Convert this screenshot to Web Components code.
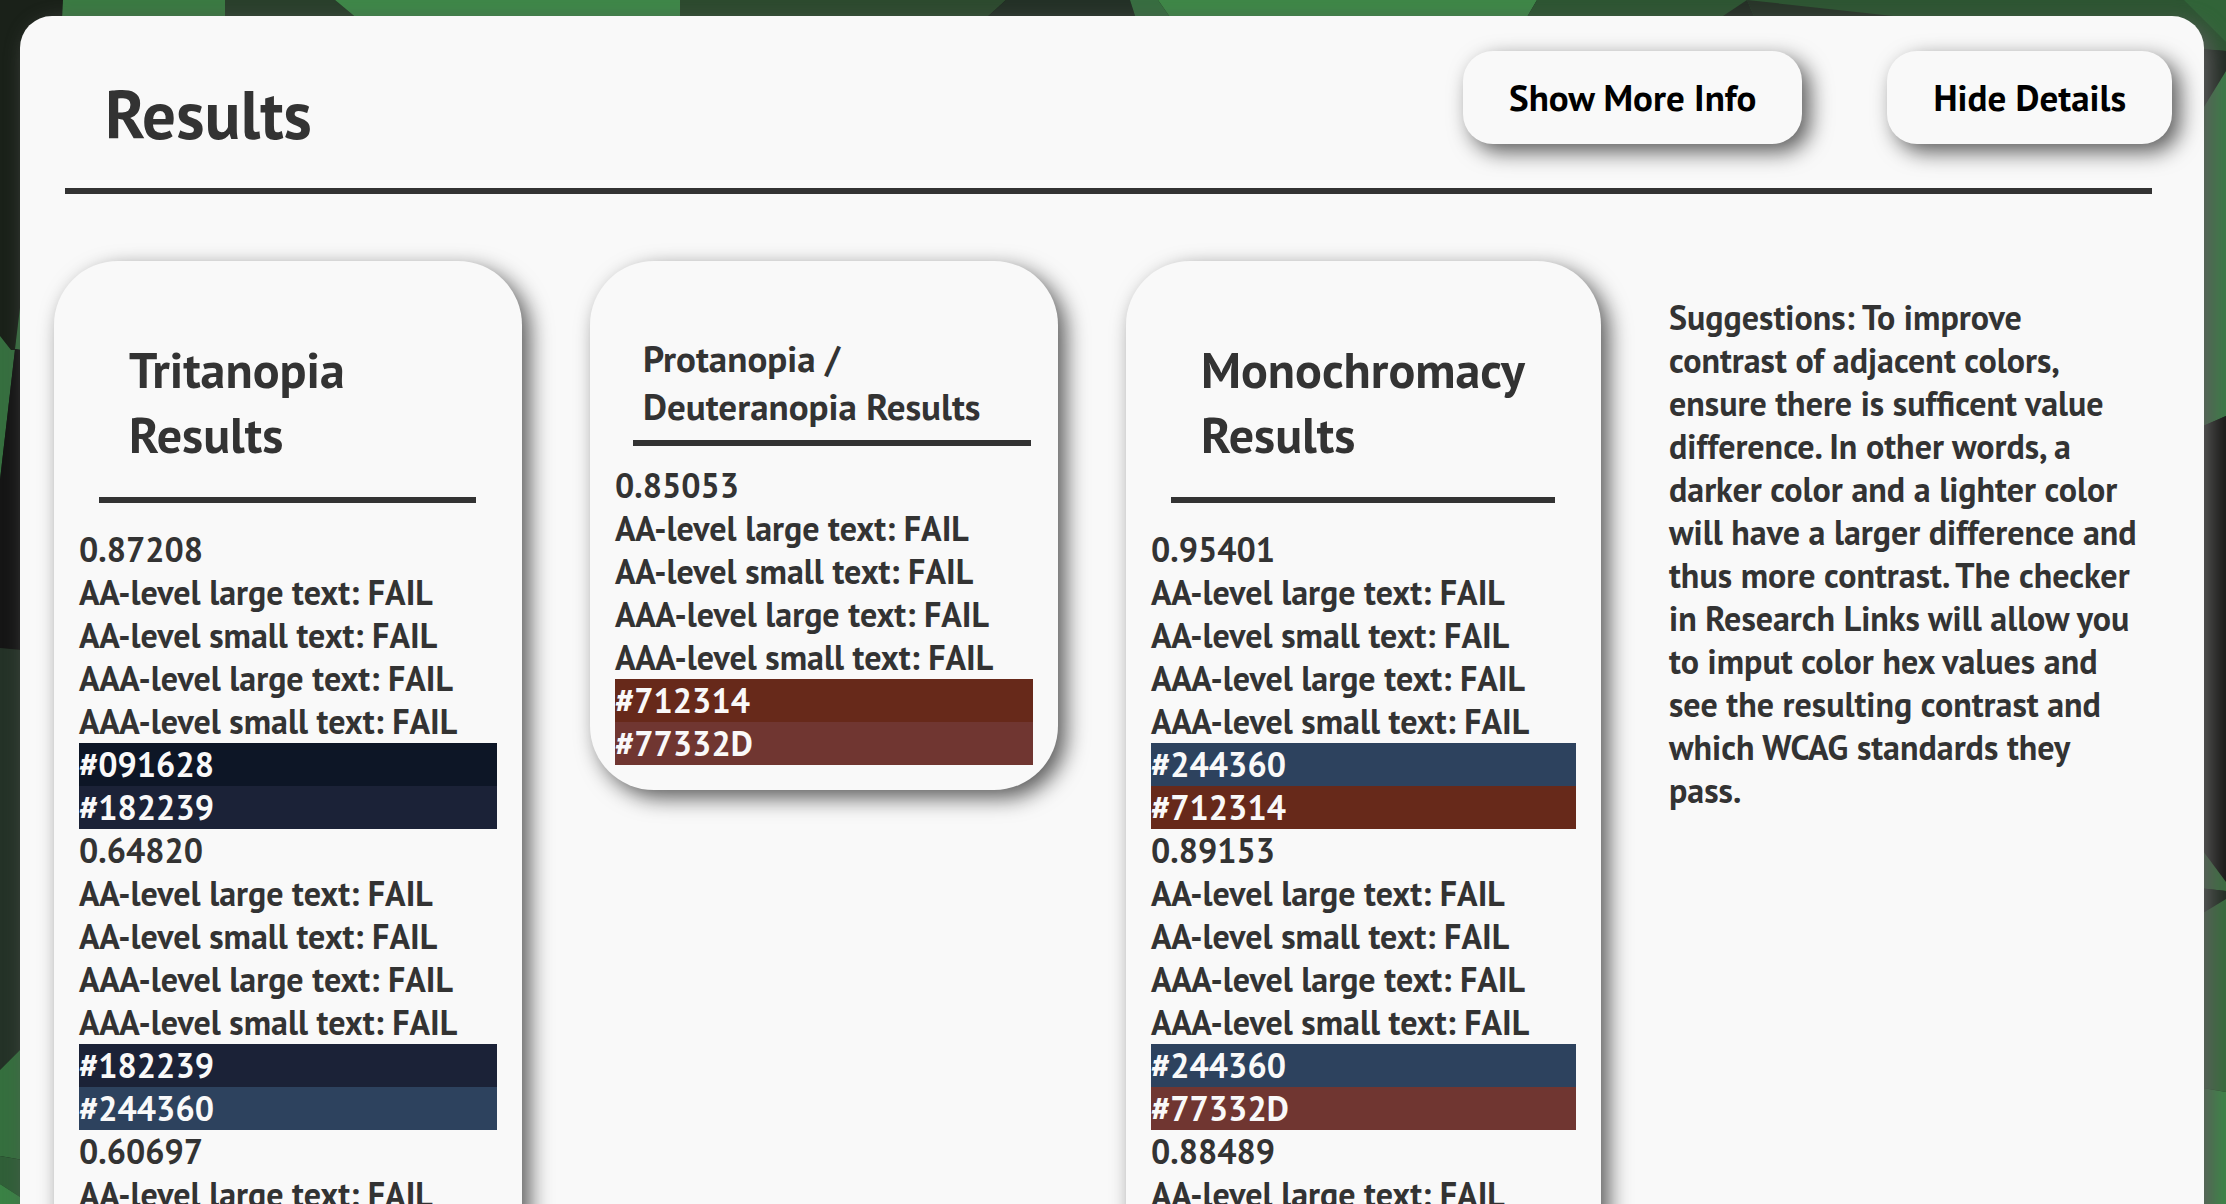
<!DOCTYPE html>
<html lang="en">
<head>
<meta charset="utf-8">
<meta name="viewport" content="width=device-width, initial-scale=1">
<title>Results</title>
<style>
  html, body { margin: 0; height: 100%; }
  body {
    --surface: #f9f9f9;
    --ink: #333;
    --shadow: 8px 8px 21px #5c5c5c;
    font-family: "PT Sans", Lato, "Open Sans", sans-serif;
    font-size: 34px;
    font-weight: 700;
    line-height: 43px;
    color: var(--ink);
    overflow: hidden;
  }
</style>
</head>
<body>
<results-page>
  <results-panel heading="Results">
    <soft-button slot="actions">Show More Info</soft-button>
    <soft-button slot="actions">Hide Details</soft-button>

    <result-card heading="Tritanopia Results">
      <contrast-entry ratio="0.87208" first="#091628" first-fill="#0d1626" second="#182239" second-fill="#1b2237"></contrast-entry>
      <contrast-entry ratio="0.64820" first="#182239" first-fill="#1b2237" second="#244360" second-fill="#2d425e"></contrast-entry>
      <contrast-entry ratio="0.60697" brief></contrast-entry>
    </result-card>

    <result-card compact heading="Protanopia / Deuteranopia Results">
      <contrast-entry ratio="0.85053" first="#712314" first-fill="#67291a" second="#77332D" second-fill="#703631"></contrast-entry>
    </result-card>

    <result-card heading="Monochromacy Results">
      <contrast-entry ratio="0.95401" first="#244360" first-fill="#2d425e" second="#712314" second-fill="#67291a"></contrast-entry>
      <contrast-entry ratio="0.89153" first="#244360" first-fill="#2d425e" second="#77332D" second-fill="#703631"></contrast-entry>
      <contrast-entry ratio="0.88489" brief></contrast-entry>
    </result-card>

    <suggestion-note>Suggestions: To improve contrast of adjacent colors, ensure there is sufficent value difference. In other words, a darker color and a lighter color will have a larger difference and thus more contrast. The checker in Research Links will allow you to imput color hex values and see the resulting contrast and which WCAG standards they pass.</suggestion-note>
  </results-panel>
</results-page>

<script>
class ResultsPage extends HTMLElement {
  constructor() {
    super();
    this.attachShadow({ mode: "open" }).innerHTML = `
      <style>
        :host { display: block; position: relative; height: 100vh; overflow: hidden; }
        svg { position: absolute; inset: 0; width: 100%; height: 100%; }
        main { position: relative; padding: 16px 22px 0 20px; }
      </style>
      <svg viewBox="0 0 2226 1204" preserveAspectRatio="none" aria-hidden="true">
        <rect width="2226" height="1204" fill="#1a2119"/>
        <path d="M63 0H225V60H60Z" fill="#3a7a42"/>
        <path d="M225 0H335L407 60H225Z" fill="#293f2b"/>
        <path d="M335 0H680V60H407Z" fill="#3e8748"/>
        <path d="M680 0H1006L940 60H680Z" fill="#2c4a2e"/>
        <path d="M1006 0H1130L1149 60H940Z" fill="#233026"/>
        <path d="M1130 0H1158L1200 60H1149Z" fill="#376d40"/>
        <path d="M1158 0H1537L1502 60H1200Z" fill="#3e8747"/>
        <path d="M1537 0H2226V51L2150 46L1502 60Z" fill="#2d5532"/>
        <path d="M1747 0L1657 60H1773Z" fill="#252f26"/>
        <path d="M1747 0L1893 16L2100 60H1773Z" fill="#283529"/>
        <path d="M2184 0H2226V42Z" fill="#316438"/>
        <path d="M2180 47L2226 51V71L2180 146Z" fill="#202a22"/>
        <path d="M2226 71V416L2180 436V146Z" fill="#3b7c46"/>
        <path d="M2180 436L2226 416V882L2180 820Z" fill="#181816"/>
        <path d="M2180 820L2226 882V891L2180 886Z" fill="#3a6e3f"/>
        <path d="M2180 886L2226 891V899L2180 927Z" fill="#202c22"/>
        <path d="M2226 899V1092L2180 1084V927Z" fill="#376c3c"/>
        <path d="M2180 1084L2226 1092V1204H2180Z" fill="#3c8646"/>
        <path d="M0 336L11 350H15L0 480Z" fill="#366f3f"/>
        <path d="M15 349L27 250L40 353Z" fill="#366f3f"/>
        <path d="M15 349L40 353V651L0 648V480Z" fill="#151515"/>
        <path d="M0 648L40 652V1030L0 1070Z" fill="#243227"/>
        <path d="M0 1070L40 1030V1163L0 1156Z" fill="#356f3e"/>
        <path d="M0 1156L40 1163V1210L0 1184Z" fill="#305f38"/>
        <path d="M0 1184L31 1204H0Z" fill="#3a8245"/>
      </svg>
      <main><slot></slot></main>`;
  }
}

class ResultsPanel extends HTMLElement {
  constructor() {
    super();
    this.attachShadow({ mode: "open" }).innerHTML = `
      <style>
        :host {
          display: flex; flex-direction: column; box-sizing: border-box; min-height: 120vh;
          border-radius: 32px; background: var(--surface); box-shadow: var(--shadow);
        }
        header { display: flex; align-items: flex-start; justify-content: space-between; padding: 35px 32px 31px 85px; }
        h1 { margin: 20px 0 0; font-size: 67px; line-height: 86px; }
        .actions { display: flex; gap: 85px; }
        hr { margin: 0 52px 0 45px; height: 6px; border: 0; background: var(--ink); }
        .columns {
          flex: 1; display: grid; gap: 68px; align-items: start;
          grid-template-columns: 468fr 468fr 475fr 468fr;
          padding: 67px 67px 67px 34px;
        }
      </style>
      <header>
        <h1></h1>
        <div class="actions"><slot name="actions"></slot></div>
      </header>
      <hr>
      <div class="columns"><slot></slot></div>`;
  }
  connectedCallback() {
    this.shadowRoot.querySelector("h1").textContent = this.getAttribute("heading");
  }
}

class SoftButton extends HTMLElement {
  constructor() {
    super();
    this.attachShadow({ mode: "open" }).innerHTML = `
      <style>
        :host { display: block; }
        button {
          display: block; padding: 22px 46px 23px; border: 0; border-radius: 30px;
          background: var(--surface); box-shadow: var(--shadow);
          font: inherit; font-size: 37px; line-height: 48px; color: #000; cursor: pointer;
        }
      </style>
      <button type="button"><slot></slot></button>`;
  }
}

class ResultCard extends HTMLElement {
  constructor() {
    super();
    this.attachShadow({ mode: "open" }).innerHTML = `
      <style>
        :host {
          display: block; align-self: stretch; box-sizing: border-box; padding: 76px 25px 25px;
          border-radius: 64px; background: var(--surface); box-shadow: var(--shadow);
        }
        h2 { margin: 0; padding: 0 50px 30px; font-size: 50px; line-height: 65px; }
        hr { margin: 0 21px 25px 20px; height: 6px; border: 0; background: var(--ink); }
        :host([compact]) { align-self: start; padding-top: 73px; }
        :host([compact]) h2 { padding: 0 28px 10px; font-size: 37px; line-height: 48px; }
        :host([compact]) hr { margin: 0 2px 18px 18px; }
      </style>
      <h2></h2>
      <hr>
      <slot></slot>`;
  }
  connectedCallback() {
    this.shadowRoot.querySelector("h2").textContent = this.getAttribute("heading");
  }
}

class ContrastEntry extends HTMLElement {
  constructor() {
    super();
    this.attachShadow({ mode: "open" });
  }
  connectedCallback() {
    const levels = this.hasAttribute("brief")
      ? ["AA-level large"]
      : ["AA-level large", "AA-level small", "AAA-level large", "AAA-level small"];
    const swatches = ["first", "second"]
      .filter(name => this.hasAttribute(name))
      .map(name => `<div class="swatch" style="background:${this.getAttribute(name + "-fill")}">${this.getAttribute(name)}</div>`);
    this.shadowRoot.innerHTML = `
      <style>
        :host { display: block; }
        .swatch { color: var(--surface); }
      </style>
      <div>${this.getAttribute("ratio")}</div>
      ${levels.map(level => `<div>${level} text: FAIL</div>`).join("")}
      ${swatches.join("")}`;
  }
}

class SuggestionNote extends HTMLElement {
  constructor() {
    super();
    this.attachShadow({ mode: "open" }).innerHTML = `
      <style>
        :host { display: block; padding-top: 35px; }
        p { margin: 0; }
      </style>
      <p><slot></slot></p>`;
  }
}

customElements.define("results-page", ResultsPage);
customElements.define("results-panel", ResultsPanel);
customElements.define("soft-button", SoftButton);
customElements.define("result-card", ResultCard);
customElements.define("contrast-entry", ContrastEntry);
customElements.define("suggestion-note", SuggestionNote);
</script>
</body>
</html>
